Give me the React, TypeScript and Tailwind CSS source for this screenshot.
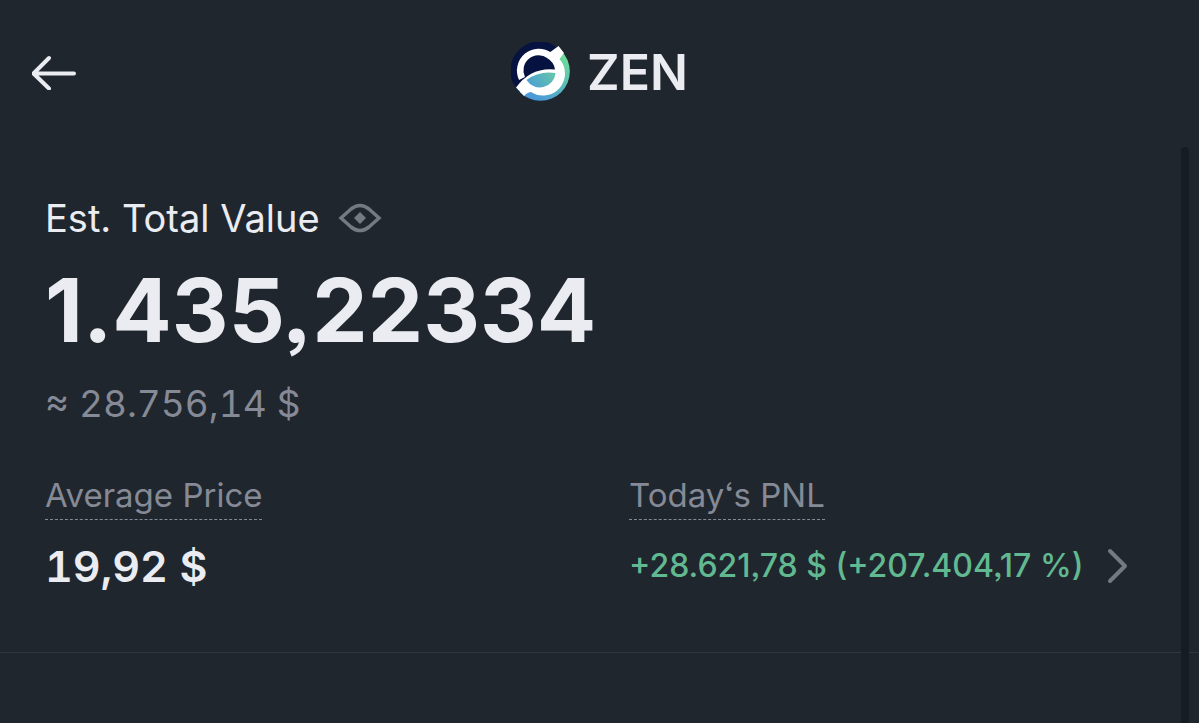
import type { ReactNode } from "react";

function ZenLogo() {
  return (
    <svg viewBox="0 0 60 60" className="size-15" aria-hidden="true">
      <defs>
        <linearGradient id="rim" x1="54" y1="14" x2="28" y2="60" gradientUnits="userSpaceOnUse">
          <stop offset="0" stopColor="#6fdc98" />
          <stop offset="0.5" stopColor="#5cbcb8" />
          <stop offset="1" stopColor="#4a98da" />
        </linearGradient>
        <linearGradient id="sea" x1="40" y1="30" x2="22" y2="44" gradientUnits="userSpaceOnUse">
          <stop offset="0" stopColor="#63c3ad" />
          <stop offset="1" stopColor="#4fa3cf" />
        </linearGradient>
      </defs>
      <circle cx="29.5" cy="29.5" r="29.3" fill="url(#rim)" />
      <path d="M50.200 8.800A29.300 29.300 0 1 0 8.800 50.200Z" fill="#06123f" />
      <circle cx="29" cy="29.5" r="18" fill="#06123f" />
      <path d="M11 36.500A18.500 18.500 0 0 1 38.500 13.500" fill="none" stroke="#fff" strokeWidth="6.500" />
      <path d="M36 10.500Q38 11 40 9.500L47.500 4L53 11L48.500 17A22 22 0 0 1 20 50Q17 50 13 54L5 45.500Q20 25 44 27.500Q43 20 36 16Z" fill="#fff" />
      <path d="M15.500 38Q28 28.500 44.500 31A15.700 15.700 0 0 1 15.500 38Z" fill="url(#sea)" />
    </svg>
  );
}

function Label({ children }: { children: ReactNode }) {
  return (
    <dt className="w-fit border-b border-dashed border-[#858a96] pb-1 text-[33px] leading-10 text-[#858a96]">
      {children}
    </dt>
  );
}

export default function App() {
  return (
    <main className="flex min-h-screen flex-col bg-[#20262d] font-['Inter',sans-serif] text-[#eaecf2] [font-feature-settings:'ss03']">
      <header className="grid h-36 grid-cols-3 items-center px-8">
        <button type="button" aria-label="Back" className="w-11">
          <svg viewBox="0 0 44 36" className="h-9 w-11" fill="none" stroke="currentColor" strokeWidth="4" strokeLinecap="round" strokeLinejoin="round">
            <path d="M42 19.500H2M17 4L1.500 19.500L17 34.500" />
          </svg>
        </button>
        <div className="flex items-center justify-center gap-4">
          <ZenLogo />
          <h1 className="text-[50px] leading-none font-semibold">ZEN</h1>
        </div>
      </header>

      <div className="relative flex-1">
        <section className="border-b border-[#32363e] pt-[50px] pr-[50px] pb-[62px] pl-[45px]">
          <div className="flex items-center gap-[18px]">
            <h2 className="text-[38px] leading-[48px]">Est. Total Value</h2>
            <button type="button" aria-label="Hide balance" className="text-[#747983]">
              <svg viewBox="0 0 44 30" className="h-[30px] w-11" fill="none" stroke="currentColor" strokeWidth="3.500">
                <path d="M3 15L13 6Q22 -1 31 6L41 15L31 24Q22 31 13 24Z" />
                <path d="M22 9L28 15L22 21L16 15Z" fill="currentColor" stroke="none" />
              </svg>
            </button>
          </div>
          <p className="mt-5 text-[88px] leading-24 font-bold">1.435,22334</p>
          <p className="mt-[22px] text-[37px] leading-[48px] text-[#858a96] tabular-nums">≈ 28.756,14 $</p>

          <dl className="mt-[47px] grid grid-cols-2 gap-16">
            <div>
              <Label>Average Price</Label>
              <dd className="mt-[22px] text-[43px] leading-[48px] font-semibold tabular-nums">19,92 $</dd>
            </div>
            <div>
              <Label>Today‘s PNL</Label>
              <dd className="mt-[22px]">
                <a href="#pnl" className="flex items-center gap-6 text-[32px] leading-[48px] font-medium whitespace-nowrap text-[#61b992]">
                  +28.621,78 $ (+207.404,17 %)
                  <svg viewBox="0 0 22 36" className="h-9 w-[22px] shrink-0" fill="none" stroke="#747983" strokeWidth="4" strokeLinecap="round" strokeLinejoin="round" aria-hidden="true">
                    <path d="M3 3L18 18L3 33" />
                  </svg>
                </a>
              </dd>
            </div>
          </dl>
        </section>
        <div className="absolute top-[3px] right-[10px] bottom-0 w-2 rounded-t-sm bg-[#171b22]" />
      </div>
    </main>
  );
}
